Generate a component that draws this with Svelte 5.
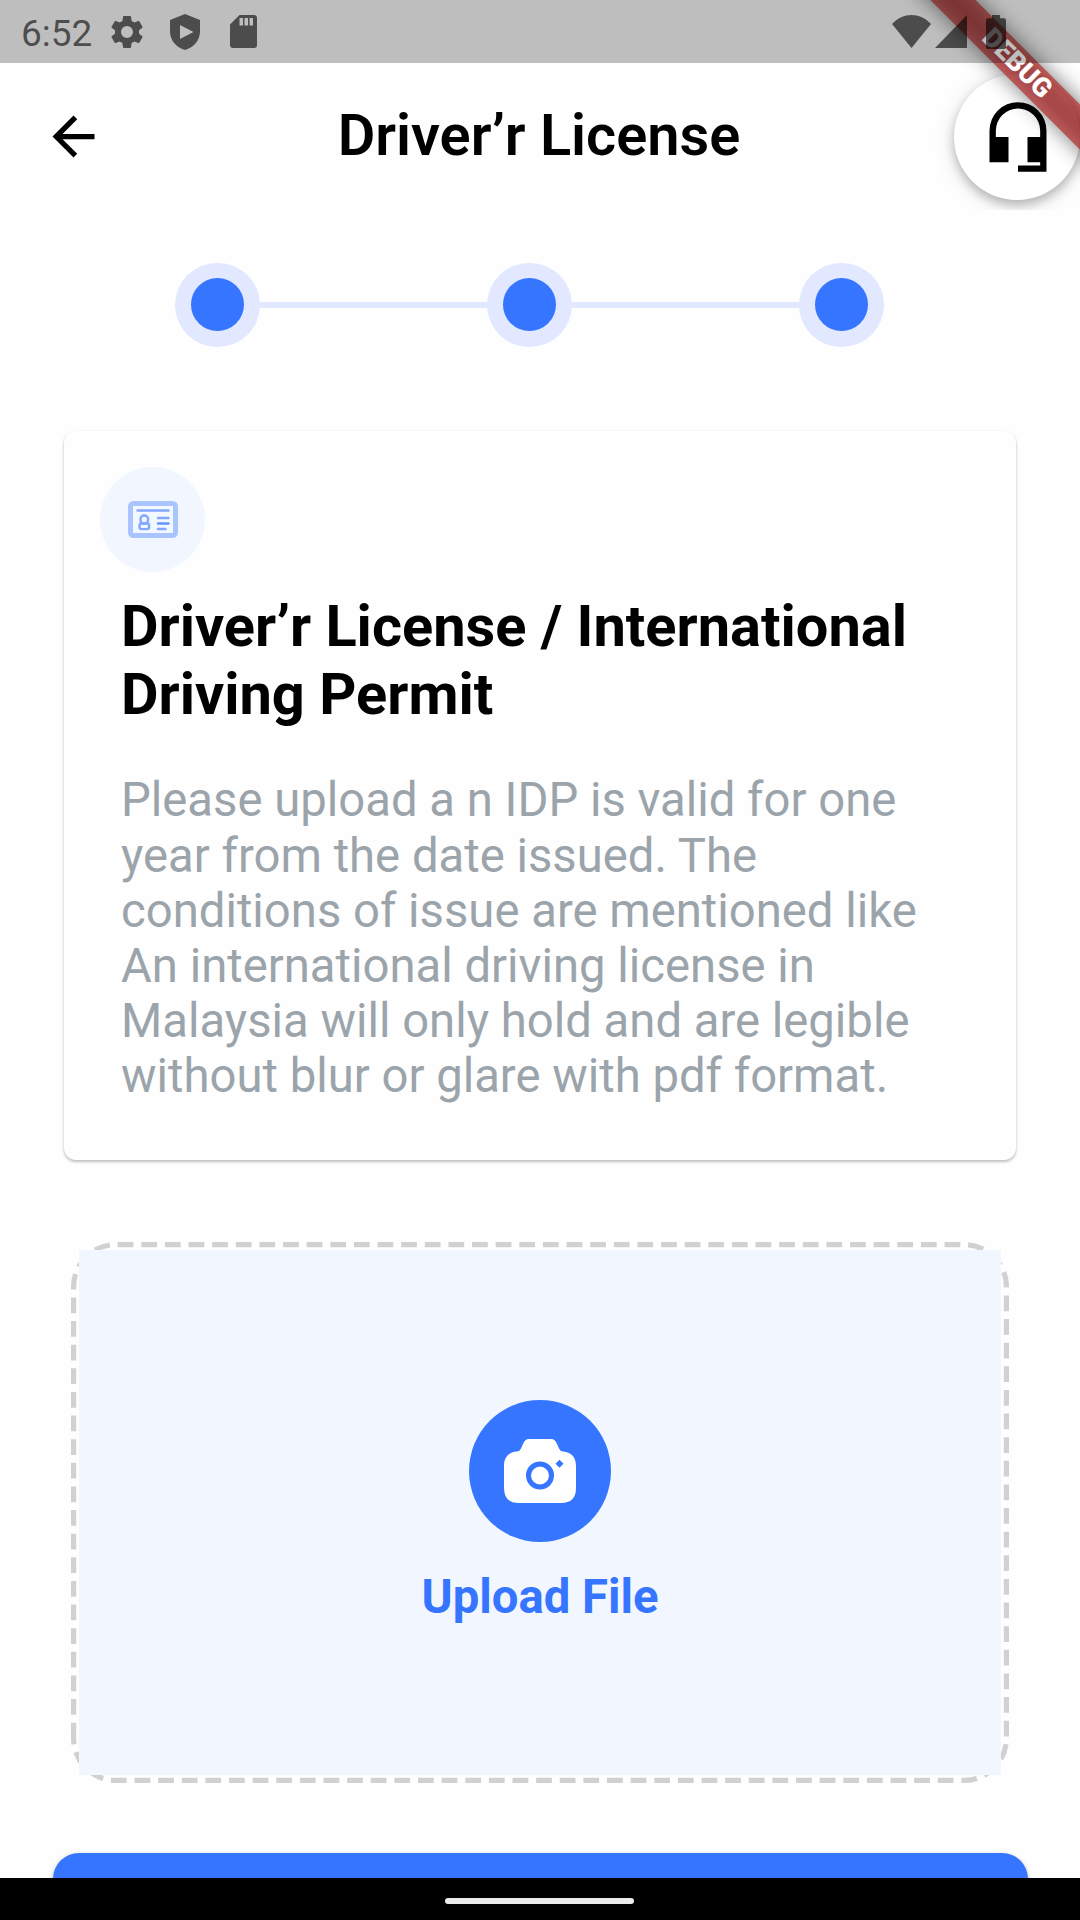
<script>
  const steps = [1, 2, 3];
</script>

<div class="screen">
  <div class="status">
    <span class="time">6:52</span>
    <svg class="gear" viewBox="0 0 24 24"><path d="M19.14 12.94c.04-.3.06-.61.06-.94s-.02-.64-.07-.94l2.03-1.58a.49.49 0 0 0 .12-.61l-1.92-3.32a.49.49 0 0 0-.59-.22l-2.39.96a7 7 0 0 0-1.62-.94l-.36-2.54a.48.48 0 0 0-.48-.41h-3.84a.48.48 0 0 0-.47.41l-.36 2.54c-.59.24-1.13.57-1.62.94l-2.39-.96a.48.48 0 0 0-.59.22L2.740 8.870a.48.48 0 0 0 .12.61l2.030 1.580c-.05.3-.09.63-.09.94s.02.64.07.94l-2.030 1.580a.49.49 0 0 0-.12.61l1.920 3.320c.12.22.37.29.59.22l2.390-.96c.5.38 1.030.7 1.620.94l.36 2.540c.05.24.24.41.48.41h3.840c.24 0 .44-.17.47-.41l.36-2.540c.59-.24 1.130-.56 1.620-.94l2.390.96c.22.08.47 0 .59-.22l1.920-3.320a.48.48 0 0 0-.12-.61zM12 15.600a3.600 3.600 0 1 1 0-7.200 3.600 3.600 0 0 1 0 7.200z"/></svg>
    <svg class="shield" viewBox="0 0 30 36"><path fill-rule="evenodd" d="M15 0 30 6v11.500c0 8.500-6 15.800-15 18.500C6 33.300 0 26 0 17.500V6zM10 11v14l13.500-7z"/></svg>
    <svg class="sd" viewBox="0 0 27 33"><path fill-rule="evenodd" d="M9.500 0H24a3 3 0 0 1 3 3v27a3 3 0 0 1-3 3H3a3 3 0 0 1-3-3V9.500zM9.500 3v7.500h3.500V3zM14.500 3v7.500h3.500V3zM19.500 3v7.500h3.500V3z"/></svg>
    <span class="spacer"></span>
    <svg class="wifi" viewBox="0 0 39 33"><path d="M0 9C11-3 28-3 39 9L19.500 33z"/></svg>
    <svg class="signal" viewBox="0 0 32 33"><path d="M32 0v33H0z"/></svg>
    <svg class="battery" viewBox="0 0 20 34"><path d="M6 0h8v3.300h4a2 2 0 0 1 2 2V32a2 2 0 0 1-2 2H2a2 2 0 0 1-2-2V5.300a2 2 0 0 1 2-2h4z"/></svg>
  </div>

  <header class="appbar">
    <svg class="back" viewBox="0 0 24 24"><path d="M20 11H7.830l5.590-5.590L12 4l-8 8 8 8 1.410-1.410L7.830 13H20z"/></svg>
    <h1>Driver’r License</h1>
    <button class="support" aria-label="Support">
      <svg viewBox="0 0 24 24"><path d="M12 1a9 9 0 0 0-9 9v10h6v-8H5v-2a7 7 0 0 1 14 0v2h-4v8h4v1h-7v2h9V10a9 9 0 0 0-9-9z"/></svg>
    </button>
  </header>

  <main>
    <div class="stepper">
      {#each steps as step (step)}
        <span class="step"><i></i></span>
        {#if step < steps.length}<span class="line"></span>{/if}
      {/each}
    </div>

    <section class="card">
      <div class="badge">
        <svg viewBox="0 0 50 37">
          <rect x="2.500" y="2.500" width="45" height="32" rx="3" fill="#f3f7ff" stroke="#a9c4ff" stroke-width="5"/>
          <g fill="none" stroke="#82a8ff" stroke-width="2.400" stroke-linecap="round">
            <path d="M9.500 9.500h31M30 17h10.500M30 28h7.500"/>
            <path stroke="#6793ff" d="M30 22.500h10.500"/>
            <rect x="12.500" y="14.500" width="7.600" height="8" rx="3.500"/>
            <rect x="11.500" y="22.500" width="9.600" height="5.600" rx="2"/>
          </g>
        </svg>
      </div>
      <h2>Driver’r License / International<br />Driving Permit</h2>
      <p>Please upload a n IDP is valid for one<br />year from the date issued. The<br />conditions of issue are mentioned like<br />An international driving license in<br />Malaysia will only hold and are legible<br />without blur or glare with pdf format.</p>
    </section>

    <section class="upload">
      <svg class="dashes" viewBox="0 0 938 541"><path d="M2.600 496.400V44.600a42 42 0 0 1 42-42H893.400a42 42 0 0 1 42 42V496.400a42 42 0 0 1-42 42H44.600a42 42 0 0 1-42-42z"/></svg>
      <div class="drop">
        <div class="camera">
          <svg viewBox="0 0 72 64">
            <path fill="#fff" d="M25 0H47Q51 0 53 5L55 9.500Q56 12 59 12.500C67 13 72 18 72 27V49Q72 64 57 64H15Q0 64 0 49V27C0 18 5 13 13 12.500Q16 12 17 9.500L19 5Q21 0 25 0z"/>
            <circle cx="36" cy="36.500" r="11.500" fill="none" stroke="#3575ff" stroke-width="5"/>
            <path fill="#3575ff" d="M55.500 20.700 59.500 24.700 55.500 28.700 51.500 24.700z"/>
          </svg>
        </div>
        <span>Upload File</span>
      </div>
    </section>

    <div class="submit"></div>
  </main>

  <footer class="nav"><span></span></footer>
  <div class="debug"><span>DEBUG</span></div>
</div>

<style>
  :global(body) { margin: 0; }
  .screen {
    position: relative;
    width: 1080px;
    height: 1920px;
    overflow: hidden;
    display: flex;
    flex-direction: column;
    background: #fefefe;
    font-family: Roboto, sans-serif;
    color: #000;
  }
  svg { display: block; flex: none; }
  h1, h2, p { margin: 0; }

  .status {
    position: relative;
    z-index: 3;
    flex: none;
    box-sizing: border-box;
    height: 63px;
    padding: 0 74px 0 21px;
    display: flex;
    align-items: center;
    background: rgba(0, 0, 0, 0.25);
    fill: rgba(0, 0, 0, 0.6);
  }
  .time { width: 88px; padding-top: 4px; font-size: 37px; line-height: 44px; color: rgba(0, 0, 0, 0.6); }
  .gear { width: 40px; height: 40px; margin-left: -2px; }
  .shield { width: 30px; height: 36px; margin-left: 23px; }
  .sd { width: 27px; height: 33px; margin-left: 30px; }
  .spacer { flex: 1; }
  .wifi { width: 39px; height: 33px; margin: -1px 4px 0 0; }
  .signal { width: 32px; height: 33px; margin: -1px 19px 0 0; }
  .battery { width: 20px; height: 34px; }

  .appbar {
    position: relative;
    flex: none;
    overflow: hidden;
    height: 147px;
    display: grid;
    grid-template-columns: 126px 1fr 126px;
    align-items: center;
    background: #fefefe;
  }
  .back { width: 63px; height: 63px; margin-left: 42px; }
  h1 { padding: 0 2px 3px 0; text-align: center; font-size: 57.750px; line-height: 68px; font-weight: 600; }
  .support {
    width: 126px;
    height: 126px;
    padding: 0;
    border: 0;
    border-radius: 50%;
    background: #fff;
    display: flex;
    align-items: center;
    justify-content: center;
    box-shadow: 0 5px 11px rgba(0, 0, 0, 0.26), 0 4px 26px rgba(0, 0, 0, 0.09);
  }
  .support svg { width: 76px; height: 76px; margin-left: 1px; }

  main { flex: 1; min-height: 0; display: flex; flex-direction: column; overflow: hidden; }
  .stepper { flex: none; display: flex; align-items: center; height: 84.500px; margin: 52.500px 0 0 175px; }
  .step {
    width: 84.500px;
    height: 84.500px;
    border-radius: 50%;
    background: #e1e8ff;
    display: grid;
    place-items: center;
  }
  .step i { width: 53px; height: 53px; border-radius: 50%; background: #3575ff; }
  .line { width: 227.700px; height: 6px; background: #e1e8ff; }

  .card {
    flex: none;
    box-sizing: border-box;
    width: 952px;
    height: 729px;
    margin: 84px 64px 0;
    padding: 36px 36px 0;
    border-radius: 12px;
    box-shadow: 0 2px 3px rgba(0, 0, 0, 0.24), 0 0 3px rgba(0, 0, 0, 0.05);
    background: #fefefe;
  }
  .badge {
    width: 105px;
    height: 105px;
    border-radius: 50%;
    background: #f1f6ff;
    display: grid;
    place-items: center;
  }
  .badge svg { width: 50px; height: 37px; }
  h2 { margin: 20px 0 0 21px; font-size: 57.750px; line-height: 68px; font-weight: 700; white-space: nowrap; }
  p { margin: 45.300px 0 0 21px; font-size: 47.250px; line-height: 55.200px; color: #9ba4ab; white-space: nowrap; }

  .upload {
    flex: none;
    position: relative;
    width: 938px;
    height: 541px;
    margin: 82px 71px 0;
    display: grid;
    place-items: center;
  }
  .dashes { position: absolute; inset: 0; width: 938px; height: 541px; fill: none; stroke: #d1d1d1; stroke-width: 5.250; stroke-dasharray: 15.750 7.875; }
  .drop {
    position: relative;
    width: 922px;
    height: 525px;
    background: #f1f6ff;
    display: flex;
    flex-direction: column;
    align-items: center;
  }
  .camera {
    width: 142px;
    height: 142px;
    margin-top: 150px;
    border-radius: 50%;
    background: #3575ff;
    display: grid;
    place-items: center;
  }
  .camera svg { width: 72px; height: 64px; }
  .drop span { margin-top: 28px; font-size: 47.250px; line-height: 55px; font-weight: 700; color: #3575ff; }

  .submit { flex: none; height: 126px; margin: 70px 52.500px 0; border-radius: 26px; background: #3575ff; box-shadow: 0 2px 5px rgba(0, 0, 0, 0.3); }

  .nav { flex: none; height: 42px; background: #000; display: flex; align-items: center; justify-content: center; }
  .nav span { width: 189px; height: 6px; margin: 4px 1px 0 0; border-radius: 3px; background: #ebebeb; }

  /* Corner ribbon drawn beneath the translucent status bar */
  .debug {
    position: absolute;
    z-index: 2;
    left: 870px;
    top: 73.500px;
    width: 420px;
    height: 31.500px;
    transform-origin: 210px -73.500px;
    transform: rotate(45deg);
    display: flex;
    align-items: center;
    justify-content: center;
  }
  .debug::before,
  .debug::after {
    content: '';
    position: absolute;
    inset: 0;
  }
  .debug::before { z-index: -2; background: rgba(0, 0, 0, 0.5); filter: blur(10.400px); }
  .debug::after { z-index: -1; background: rgba(183, 28, 28, 0.627); }
  .debug span { font-size: 26.800px; line-height: 31.500px; font-weight: 900; color: #fff; }
</style>
